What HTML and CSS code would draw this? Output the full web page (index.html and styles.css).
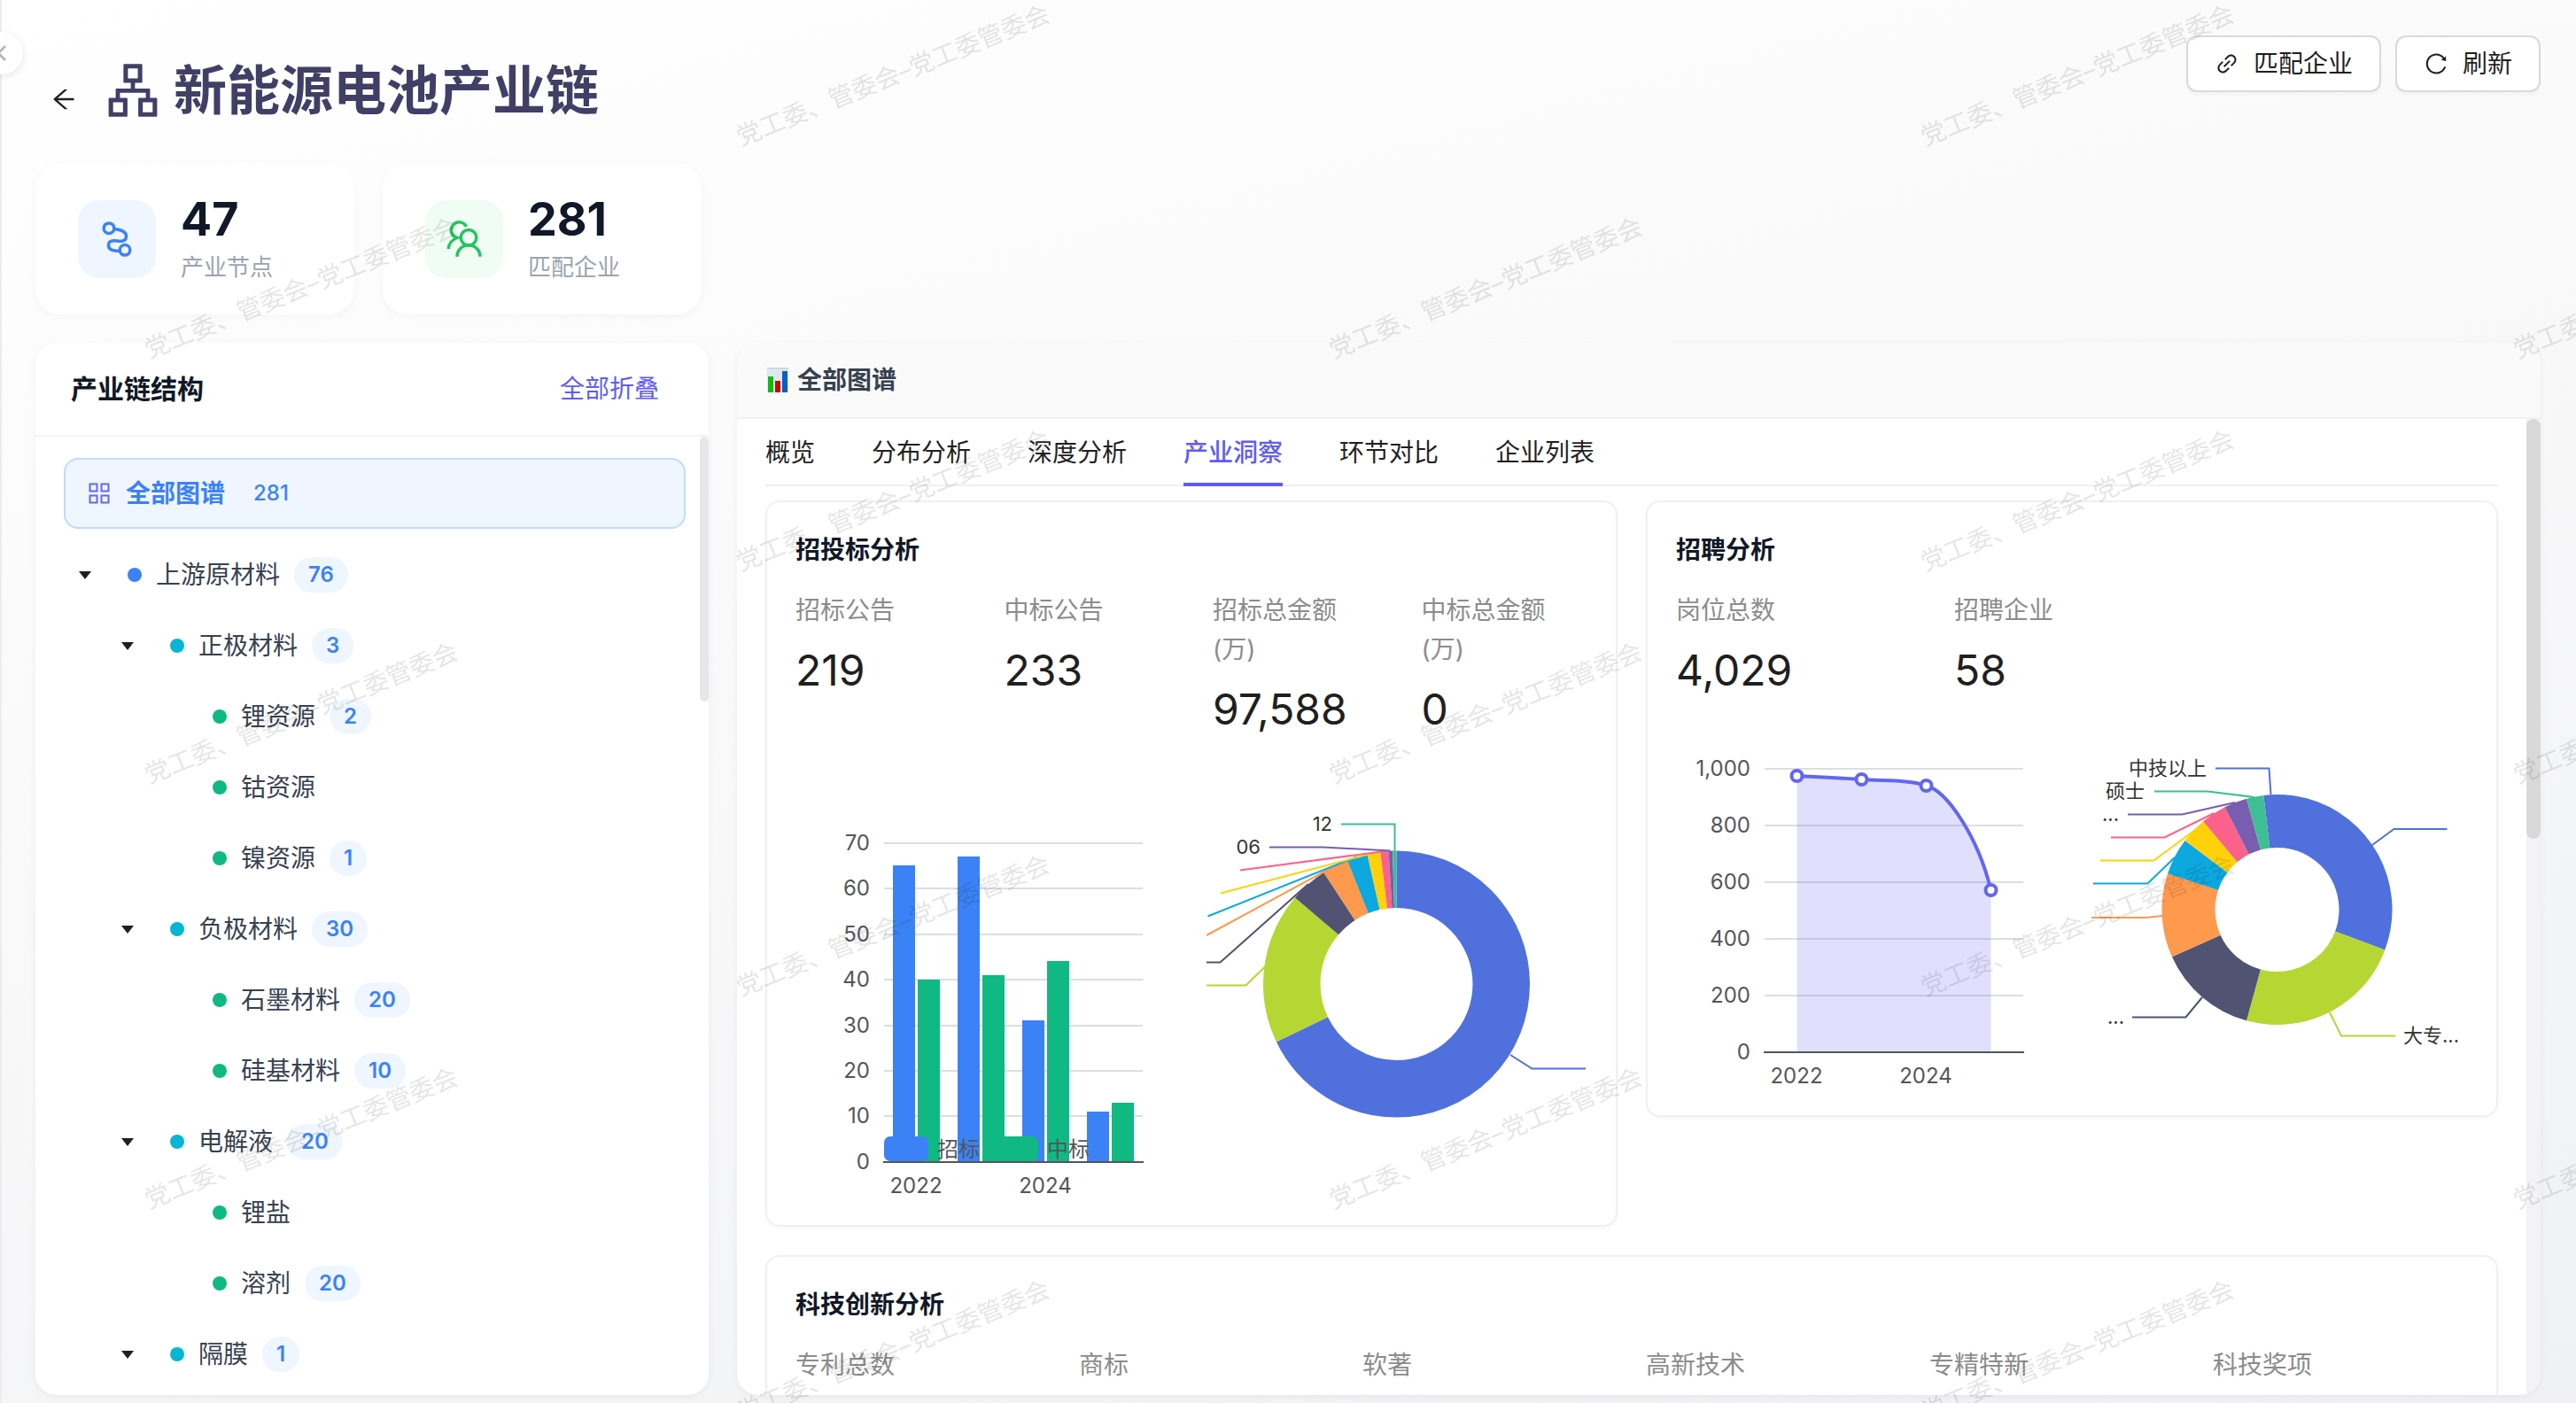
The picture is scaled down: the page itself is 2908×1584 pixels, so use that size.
FILE: index.html
```html
<!DOCTYPE html>
<html lang="zh-CN">
<head>
  <meta charset="UTF-8">
  <title>新能源电池产业链</title>
  <link rel="stylesheet" href="styles.css">
</head>

<body>
  <button class="collapse" aria-label="收起菜单">
    <svg viewBox="0 0 24 24"><path d="M16 4 8 12l8 8" fill="none" stroke="currentColor" stroke-width="3"/></svg>
  </button>

  <main class="page">
    <header class="header">
      <div class="heading">
        <button class="back" aria-label="返回">
          <svg class="icon-lg" viewBox="0 0 1024 1024"><path d="M872 474H286.9l350.2-304c5.6-4.9 2.2-14-5.2-14h-88.5c-3.9 0-7.6 1.4-10.5 3.9L155 487.8a31.96 31.96 0 000 48.3L535.1 866c1.5 1.3 3.3 2 5.2 2h91.5c7.4 0 10.8-9.2 5.2-14L286.9 550H872c4.4 0 8-3.6 8-8v-60c0-4.4-3.6-8-8-8z"/></svg>
        </button>
        <h1>
          <svg viewBox="0 0 1024 1024"><path d="M908 640H804V488c0-4.4-3.6-8-8-8H548v-96h108c8.8 0 16-7.2 16-16V80c0-8.8-7.2-16-16-16H368c-8.8 0-16 7.2-16 16v288c0 8.8 7.2 16 16 16h108v96H228c-4.4 0-8 3.6-8 8v152H116c-8.8 0-16 7.2-16 16v288c0 8.8 7.2 16 16 16h288c8.8 0 16-7.2 16-16V656c0-8.8-7.2-16-16-16H292v-88h440v88H620c-8.8 0-16 7.2-16 16v288c0 8.8 7.2 16 16 16h288c8.8 0 16-7.2 16-16V656c0-8.8-7.2-16-16-16zm-564 76v168H176V716h168zm84-408V140h168v168H428zm420 576H680V716h168v168z"/></svg>
          新能源电池产业链
        </h1>
      </div>
      <div class="actions">
        <button class="btn">
          <svg class="icon" viewBox="0 0 1024 1024"><path d="M574 665.4a8.03 8.03 0 00-11.3 0L446.5 781.6c-53.8 53.8-144.6 59.5-204 0-59.5-59.5-53.8-150.2 0-204l116.2-116.2c3.1-3.1 3.1-8.2 0-11.3l-39.8-39.8a8.03 8.03 0 00-11.3 0L191.4 526.5c-84.6 84.6-84.6 221.5 0 306s221.5 84.6 306 0l116.2-116.2c3.1-3.1 3.1-8.2 0-11.3L574 665.4zm258.6-474c-84.6-84.6-221.5-84.6-306 0L410.3 307.6a8.03 8.03 0 000 11.3l39.7 39.7c3.1 3.1 8.2 3.1 11.3 0l116.2-116.2c53.8-53.8 144.6-59.5 204 0 59.5 59.5 53.8 150.2 0 204L665.3 562.6a8.03 8.03 0 000 11.3l39.8 39.8c3.1 3.1 8.2 3.1 11.3 0l116.2-116.2c84.5-84.6 84.5-221.5 0-306.1zM610.1 372.3a8.03 8.03 0 00-11.3 0L372.3 598.7a8.03 8.03 0 000 11.3l39.6 39.6c3.1 3.1 8.2 3.1 11.3 0l226.4-226.4c3.1-3.1 3.1-8.2 0-11.3l-39.5-39.6z"/></svg>
          匹配企业
        </button>
        <button class="btn">
          <svg class="icon" viewBox="0 0 1024 1024"><path d="M909.1 209.3l-56.4 44.1C775.8 155.1 656.2 92 521.9 92 290 92 102.3 279.5 102 511.5 101.7 743.7 289.8 932 521.9 932c181.3 0 335.8-115 394.6-276.1 1.5-4.2-.7-8.9-4.9-10.3l-56.7-19.5a8 8 0 00-10.1 4.8c-1.8 5-3.8 10-5.9 14.9-17.3 41-42.1 77.8-73.7 109.4A344.77 344.77 0 01655.9 829c-42.3 17.9-87.4 27-133.8 27-46.5 0-91.5-9.1-133.8-27A341.5 341.5 0 01279 755.2a342.16 342.16 0 01-73.7-109.4c-17.9-42.4-27-87.4-27-133.9s9.1-91.5 27-133.9c17.3-41 42.1-77.8 73.7-109.4 31.6-31.6 68.4-56.4 109.3-73.8 42.3-17.9 87.4-27 133.8-27 46.5 0 91.5 9.1 133.8 27a341.5 341.5 0 01109.3 73.8c9.9 9.9 19.2 20.4 27.8 31.4l-60.2 47a8 8 0 003 14.1l175.6 43c5 1.2 9.9-2.6 9.9-7.7l.8-180.9c-.1-6.6-7.8-10.3-13-6.2z"/></svg>
          刷新
        </button>
      </div>
    </header>

    <section class="stats">
      <div class="stat">
        <div class="stat-icon blue">
          <svg viewBox="0 0 48 48"><circle cx="15" cy="11.7" r="5.8"/><circle cx="33" cy="36.3" r="5.8"/><path d="M21 12.5C30 13.5 35 16 34.5 21.5 34 27 28 26.5 24 26 18 25.5 14.5 26 14.5 31c0 5.5 5.5 6.3 12.5 6.5"/></svg>
        </div>
        <div>
          <div class="stat-value">47</div>
          <div class="stat-label">产业节点</div>
        </div>
      </div>
      <div class="stat">
        <div class="stat-icon green">
          <svg viewBox="0 0 48 48"><circle cx="29" cy="22.3" r="8.8"/><path d="M16 43.7a13 13 0 0 1 26 0M26.5 10A9 9 0 1 0 16 22.5C10 25 6.3 30 6.3 35"/></svg>
        </div>
        <div>
          <div class="stat-value">281</div>
          <div class="stat-label">匹配企业</div>
        </div>
      </div>
    </section>

    <div class="columns">
      <aside class="panel">
        <div class="tree-head">
          <h2>产业链结构</h2>
          <button class="link">全部折叠</button>
        </div>
        <div class="tree-body">
          <button class="tree-all">
            <svg class="icon-lg" viewBox="0 0 32 32"><path d="M5.500 5.500h8v8h-8zM18.500 5.500h8v8h-8zM5.500 18.500h8v8h-8zM18.500 18.500h8v8h-8z" fill="none" stroke="currentColor" stroke-width="2"/></svg>
            <span>全部图谱</span>
            <span class="count">281</span>
          </button>
          <ul class="tree">
            <li class="l1"><button class="caret" aria-label="折叠"></button><i></i>上游原材料<b>76</b></li>
            <li class="l2"><button class="caret" aria-label="折叠"></button><i></i>正极材料<b>3</b></li>
            <li class="l3"><i></i>锂资源<b>2</b></li>
            <li class="l3"><i></i>钴资源</li>
            <li class="l3"><i></i>镍资源<b>1</b></li>
            <li class="l2"><button class="caret" aria-label="折叠"></button><i></i>负极材料<b>30</b></li>
            <li class="l3"><i></i>石墨材料<b>20</b></li>
            <li class="l3"><i></i>硅基材料<b>10</b></li>
            <li class="l2"><button class="caret" aria-label="折叠"></button><i></i>电解液<b>20</b></li>
            <li class="l3"><i></i>锂盐</li>
            <li class="l3"><i></i>溶剂<b>20</b></li>
            <li class="l2"><button class="caret" aria-label="折叠"></button><i></i>隔膜<b>1</b></li>
          </ul>
          <div class="tree-thumb"></div>
        </div>
      </aside>

      <section class="panel">
        <div class="main-head">
          <svg viewBox="0 0 24 28"><path d="M0 0h24v28H0z" fill="#dfe8f0"/><path d="M0 0h24v2H0z" fill="#cfd8df"/><path d="M1 10h6v18H1z" fill="#0dbb12"/><path d="M9 15h6v13H9z" fill="#c50a0a"/><path d="M17 4h6v24h-6z" fill="#0a5fc4"/></svg>
          <h2>全部图谱</h2>
        </div>
        <div class="scroll">
          <div class="content">
            <nav class="tabs" role="tablist">
              <button role="tab">概览</button>
              <button role="tab">分布分析</button>
              <button role="tab">深度分析</button>
              <button role="tab" class="active" aria-selected="true">产业洞察</button>
              <button role="tab">环节对比</button>
              <button role="tab">企业列表</button>
            </nav>

            <div class="cards">
              <article class="card">
                <h3>招投标分析</h3>
                <dl class="figures four">
                  <div><dt>招标公告</dt><dd>219</dd></div>
                  <div><dt>中标公告</dt><dd>233</dd></div>
                  <div><dt>招标总金额<br>(万)</dt><dd>97,588</dd></div>
                  <div><dt>中标总金额<br>(万)</dt><dd>0</dd></div>
                </dl>
                <div class="charts">
                  <svg class="chart" viewBox="0 0 431 480" role="img" aria-label="招标与中标公告数">
                    <path class="grid" d="M100 81h292M100 132h292M100 184h292M100 235h292M100 287h292M100 338h292M100 389h292"/>
                    <g fill="#3b82f6">
                      <rect x="110" y="106" width="25" height="335"/>
                      <rect x="183" y="96" width="25" height="345"/>
                      <rect x="256" y="281" width="25" height="160"/>
                      <rect x="329" y="384" width="25" height="57"/>
                    </g>
                    <g fill="#10b981">
                      <rect x="138" y="235" width="25" height="206"/>
                      <rect x="211" y="230" width="25" height="211"/>
                      <rect x="284" y="214" width="25" height="227"/>
                      <rect x="357" y="374" width="25" height="67"/>
                    </g>
                    <path class="axis" d="M99 441h294"/>
                    <g class="tick end">
                      <text x="84" y="89">70</text>
                      <text x="84" y="140">60</text>
                      <text x="84" y="192">50</text>
                      <text x="84" y="243">40</text>
                      <text x="84" y="295">30</text>
                      <text x="84" y="346">20</text>
                      <text x="84" y="397">10</text>
                      <text x="84" y="449">0</text>
                    </g>
                    <g class="tick mid">
                      <text x="136" y="476">2022</text>
                      <text x="282" y="476">2024</text>
                    </g>
                    <rect x="100" y="412" width="50" height="28" rx="7" fill="#3b82f6"/>
                    <rect x="224" y="412" width="50" height="28" rx="7" fill="#10b981"/>
                    <g class="tick">
                      <text x="160" y="435">招标</text>
                      <text x="284" y="435">中标</text>
                    </g>
                  </svg>
                  <svg class="chart" viewBox="0 0 431 480" role="img" aria-label="月度分布">
                    <g class="ring" stroke-width="64.5" transform="rotate(-90 215.5 240)">
                      <circle class="c1" cx="215.5" cy="240" r="118.25" pathLength="360" stroke-dasharray="244.3 360"/>
                      <circle class="c2" cx="215.5" cy="240" r="118.25" pathLength="360" stroke-dasharray="66.1 360" stroke-dashoffset="-244.3"/>
                      <circle class="c3" cx="215.5" cy="240" r="118.25" pathLength="360" stroke-dasharray="16.5 360" stroke-dashoffset="-310.4"/>
                      <circle class="c4" cx="215.5" cy="240" r="118.25" pathLength="360" stroke-dasharray="11.4 360" stroke-dashoffset="-326.9"/>
                      <circle class="c5" cx="215.5" cy="240" r="118.25" pathLength="360" stroke-dasharray="9 360" stroke-dashoffset="-338.3"/>
                      <circle class="c6" cx="215.5" cy="240" r="118.25" pathLength="360" stroke-dasharray="5.7 360" stroke-dashoffset="-347.3"/>
                      <circle class="c7" cx="215.5" cy="240" r="118.25" pathLength="360" stroke-dasharray="3.6 360" stroke-dashoffset="-353"/>
                      <circle class="c8" cx="215.5" cy="240" r="118.25" pathLength="360" stroke-dasharray="1.7 360" stroke-dashoffset="-356.6"/>
                      <circle class="c9" cx="215.5" cy="240" r="118.25" pathLength="360" stroke-dasharray="1.7 360" stroke-dashoffset="-358.3"/>
                    </g>
                    <g class="leader">
                      <path class="c1" d="M429 335.5h-60.5L344 320"/>
                      <path class="c2" d="M1 241.5h44.5L67 220.5"/>
                      <path class="c3" d="M1 215.5h15.5L116 127"/>
                      <path class="c4" d="M1 185 146 106.5"/>
                      <path class="c5" d="M2.5 163.5 171 96"/>
                      <path class="c6" d="M17 137.5 189.5 92"/>
                      <path class="c7" d="M39 111.5 202 90"/>
                      <path class="c8" d="M72 85.5h60.5L208.5 89.5"/>
                      <path class="c9" d="M153 59.5h60.5V90"/>
                    </g>
                    <g class="slice-label end">
                      <text x="143" y="67">12</text>
                      <text x="62" y="93">06</text>
                    </g>
                  </svg>
                </div>
              </article>

              <article class="card">
                <h3>招聘分析</h3>
                <dl class="figures three">
                  <div><dt>岗位总数</dt><dd>4,029</dd></div>
                  <div><dt>招聘企业</dt><dd>58</dd></div>
                </dl>
                <div class="charts">
                  <svg class="chart" viewBox="0 0 431 400" role="img" aria-label="岗位趋势">
                    <path class="grid" d="M100 41h292M100 105h292M100 169h292M100 233h292M100 297h292"/>
                    <path d="M136.5 49C161 50 185 51 209.5 53 234 55 263 53 282.5 60 306 66 341 118 355.5 178V361H136.5z" fill="#6366f1" fill-opacity=".2"/>
                    <path class="axis" d="M99 361h294"/>
                    <path d="M136.5 49C161 50 185 51 209.5 53 234 55 263 53 282.5 60 306 66 341 118 355.5 178" fill="none" stroke="#6366f1" stroke-width="4"/>
                    <g fill="#fff" stroke="#6366f1" stroke-width="4">
                      <circle cx="136.5" cy="49" r="6"/>
                      <circle cx="209.5" cy="53" r="6"/>
                      <circle cx="282.5" cy="60" r="6"/>
                      <circle cx="355.5" cy="178" r="6"/>
                    </g>
                    <g class="tick end">
                      <text x="84" y="49">1,000</text>
                      <text x="84" y="113">800</text>
                      <text x="84" y="177">600</text>
                      <text x="84" y="241">400</text>
                      <text x="84" y="305">200</text>
                      <text x="84" y="369">0</text>
                    </g>
                    <g class="tick mid">
                      <text x="136" y="396">2022</text>
                      <text x="282" y="396">2024</text>
                    </g>
                  </svg>
                  <svg class="chart" viewBox="0 0 431 400" role="img" aria-label="学历分布">
                    <g class="ring" stroke-width="60" transform="rotate(-96.7 215.5 200)">
                      <circle class="c1" cx="215.5" cy="200" r="100" pathLength="360" stroke-dasharray="117.2 360"/>
                      <circle class="c2" cx="215.5" cy="200" r="100" pathLength="360" stroke-dasharray="84.9 360" stroke-dashoffset="-117.2"/>
                      <circle class="c3" cx="215.5" cy="200" r="100" pathLength="360" stroke-dasharray="50.3 360" stroke-dashoffset="-202.1"/>
                      <circle class="c4" cx="215.5" cy="200" r="100" pathLength="360" stroke-dasharray="42.6 360" stroke-dashoffset="-252.4"/>
                      <circle class="c5" cx="215.5" cy="200" r="100" pathLength="360" stroke-dasharray="18.6 360" stroke-dashoffset="-295"/>
                      <circle class="c6" cx="215.5" cy="200" r="100" pathLength="360" stroke-dasharray="13.2 360" stroke-dashoffset="-313.6"/>
                      <circle class="c7" cx="215.5" cy="200" r="100" pathLength="360" stroke-dasharray="12.9 360" stroke-dashoffset="-326.8"/>
                      <circle class="c8" cx="215.5" cy="200" r="100" pathLength="360" stroke-dasharray="11.6 360" stroke-dashoffset="-339.7"/>
                      <circle class="c9" cx="215.5" cy="200" r="100" pathLength="360" stroke-dasharray="8.7 360" stroke-dashoffset="-351.3"/>
                    </g>
                    <g class="leader">
                      <path class="c1" d="M407.5 109h-60L323 127"/>
                      <path class="c2" d="M349 342.5h-61L275 316"/>
                      <path class="c3" d="M52 321.5h60.5L131 299"/>
                      <path class="c4" d="M6 209h61.5L86.5 207"/>
                      <path class="c5" d="M8 170.5h61.5L100 141"/>
                      <path class="c6" d="M16 144.5h60.5L123 110"/>
                      <path class="c7" d="M28 118.5h60.5L144.5 91"/>
                      <path class="c8" d="M47 92.5h61.5L168 79"/>
                      <path class="c9" d="M77 66.5h60L190 73"/>
                      <path class="c1" d="M146 40.5h60.5L208.5 70"/>
                    </g>
                    <g class="slice-label end">
                      <text x="136" y="48">中技以上</text>
                      <text x="66" y="74">硕士</text>
                      <text x="37" y="100">...</text>
                      <text x="43" y="329">...</text>
                    </g>
                    <g class="slice-label">
                      <text x="358" y="350">大专...</text>
                    </g>
                  </svg>
                </div>
              </article>

              <article class="card wide">
                <h3>科技创新分析</h3>
                <dl class="figures six">
                  <div><dt>专利总数</dt></div>
                  <div><dt>商标</dt></div>
                  <div><dt>软著</dt></div>
                  <div><dt>高新技术</dt></div>
                  <div><dt>专精特新</dt></div>
                  <div><dt>科技奖项</dt></div>
                </dl>
              </article>
            </div>
          </div>
          <div class="track"><div class="thumb"></div></div>
        </div>
      </section>
    </div>
  </main>

  <!-- watermark tile, repeated over the whole page -->
  <svg class="watermark" aria-hidden="true">
    <defs>
      <pattern id="mark" width="1337" height="480" patternUnits="userSpaceOnUse">
        <text transform="translate(340 325) rotate(-22)" y="10">党工委、管委会–党工委管委会</text>
        <text transform="translate(1008 85) rotate(-22)" y="10">党工委、管委会–党工委管委会</text>
      </pattern>
    </defs>
    <rect width="100%" height="100%" fill="url(#mark)"/>
  </svg>
</body>

</html>
```
FILE: styles.css
```css
:root {
  --primary: #5f5cf6;
  --blue: #3b82f6;
  --text: #1f1f1f;
  --dark: #111827;
  --muted: #8c8c8c;
  --line: #f0f0f0;
}

* {
  box-sizing: border-box;
}

body {
  margin: 0;
  height: 100vh;
  overflow: hidden;
  font-family: Inter, "Noto Sans CJK SC", sans-serif;
  font-size: 28px;
  line-height: 44px;
  color: var(--text);
  background: linear-gradient(165deg, #fff 0%, #fafafa 35%, #f0f1f4 100%);
  border-left: 2px solid #ececee;
}

h1, h2, h3, dl, dd, ul {
  margin: 0;
  padding: 0;
}

button {
  font: inherit;
  color: inherit;
  background: none;
  border: none;
  padding: 0;
  cursor: pointer;
}

svg {
  display: block;
  fill: currentColor;
}

.icon {
  width: 28px;
  height: 28px;
}

.icon-lg {
  width: 32px;
  height: 32px;
}

.page {
  height: 100%;
  display: flex;
  flex-direction: column;
  padding: 40px 40px 9px 38px;
}

/* round handle that sits half outside the window edge */
.collapse {
  position: absolute;
  left: -22px;
  top: 36px;
  width: 48px;
  height: 48px;
  border-radius: 50%;
  background: #fff;
  color: #b8b8b8;
  box-shadow: 0 2px 8px rgba(0, 0, 0, 0.1);
  padding: 12px;
}

.header {
  display: flex;
  justify-content: space-between;
  align-items: flex-start;
  margin-bottom: 36px;
}

.heading {
  display: flex;
  align-items: flex-end;
  gap: 12px;
  padding-top: 16px;
}

.back {
  width: 64px;
  height: 72px;
  display: grid;
  place-items: center;
}

h1 {
  display: flex;
  align-items: center;
  gap: 12px;
  font-size: 60px;
  line-height: 92px;
  font-weight: 700;
  color: #413f66;
}

h1 svg {
  width: 68px;
  height: 68px;
}

.actions {
  display: flex;
  gap: 16px;
}

.btn {
  display: flex;
  align-items: center;
  gap: 16px;
  height: 64px;
  padding: 0 30px;
  background: #fff;
  border: 2px solid #d9d9d9;
  border-radius: 12px;
  box-shadow: 0 4px 0 rgba(0, 0, 0, 0.02);
}

.stats {
  display: flex;
  gap: 32px;
  margin-bottom: 32px;
}

.stat {
  display: flex;
  align-items: center;
  gap: 28px;
  width: 360px;
  padding: 34px 48px;
  background: #fff;
  border-radius: 28px;
  box-shadow: 0 2px 8px rgba(0, 0, 0, 0.04);
}

.stat-icon {
  width: 88px;
  height: 88px;
  border-radius: 24px;
  padding: 20px;
}

.stat-icon svg {
  fill: none;
  stroke: currentColor;
  stroke-width: 3.5;
}

.stat-icon.blue {
  background: #eff6ff;
  color: var(--blue);
}

.stat-icon.green {
  background: #f0fdf4;
  color: #22c55e;
}

.stat-value {
  font-size: 52px;
  line-height: 60px;
  font-weight: 700;
  color: var(--dark);
}

.stat-label {
  margin-top: 4px;
  font-size: 26px;
  line-height: 39px;
  color: #9ca3af;
}

.columns {
  flex: 1;
  min-height: 0;
  display: grid;
  grid-template-columns: 760px 1fr;
  grid-template-rows: 100%;
  gap: 32px;
}

.panel {
  display: flex;
  flex-direction: column;
  min-height: 0;
  background: #fff;
  border-radius: 24px;
  overflow: hidden;
  box-shadow: 0 2px 8px rgba(0, 0, 0, 0.05);
}

/* tree */
.tree-head {
  display: flex;
  align-items: center;
  justify-content: space-between;
  height: 106px;
  flex: none;
  padding: 0 56px 0 40px;
  border-bottom: 2px solid #f3f4f6;
}

.tree-head h2 {
  font-size: 30px;
  font-weight: 600;
  color: var(--dark);
}

.link {
  color: var(--primary);
}

.tree-body {
  position: relative;
  flex: 1;
  min-height: 0;
  padding: 24px 26px 0 32px;
  overflow: hidden;
}

.tree-all {
  display: flex;
  align-items: center;
  gap: 14px;
  width: 100%;
  height: 80px;
  padding: 0 22px;
  margin-bottom: 12px;
  background: #eff6ff;
  border: 2px solid #bfdbfe;
  border-radius: 16px;
  color: var(--blue);
  font-weight: 600;
}

.tree-all svg {
  color: #6366f1;
}

.tree-all .count {
  margin-left: 18px;
  font-size: 24px;
  font-weight: 500;
}

.tree {
  list-style: none;
}

.tree li {
  display: flex;
  align-items: center;
  height: 80px;
  color: #374151;
}

.tree i {
  width: 16px;
  height: 16px;
  margin-right: 16px;
  border-radius: 50%;
  background: #10b981;
}

.tree b {
  margin-left: 16px;
  padding: 0 16px;
  border-radius: 20px;
  background: #eff6ff;
  color: var(--blue);
  font-size: 24px;
  line-height: 40px;
  font-weight: 600;
}

.l2 {
  padding-left: 48px;
}

.l3 {
  padding-left: 168px;
}

.tree .l1 i {
  background: var(--blue);
}

.tree .l2 i {
  background: #06b6d4;
}

.caret {
  width: 48px;
  height: 48px;
  margin-right: 24px;
  display: grid;
  place-items: center;
}

.caret::before {
  content: "";
  border: 7px solid transparent;
  border-top: 9px solid var(--text);
  border-bottom: 0;
}

.tree-thumb {
  position: absolute;
  top: 0;
  right: 0;
  width: 10px;
  height: 27.6%;
  border-radius: 5px;
  background: #e5e7eb;
}

/* main panel */
.main-head {
  display: flex;
  align-items: center;
  gap: 10px;
  height: 86px;
  flex: none;
  padding: 0 34px;
  background: #fafafa;
  border-bottom: 2px solid var(--line);
}

.main-head svg {
  width: 24px;
  height: 28px;
}

.main-head h2 {
  font-size: 28px;
  font-weight: 600;
  color: #374151;
}

.scroll {
  flex: 1;
  min-height: 0;
  display: flex;
}

.content {
  flex: 1;
  min-width: 0;
  padding: 16px 32px;
}

.track {
  width: 16px;
  background: #f3f3f5;
}

.thumb {
  height: 43%;
  border-radius: 8px;
  background: #d9d9d9;
}

.tabs {
  display: flex;
  gap: 64px;
  margin-bottom: 16px;
  box-shadow: inset 0 -2px 0 var(--line);
}

.tabs button {
  padding-bottom: 12px;
  border-bottom: 4px solid transparent;
}

.tabs .active {
  color: var(--primary);
  border-color: var(--primary);
  font-weight: 500;
}

.cards {
  display: grid;
  grid-template-columns: 1fr 1fr;
  align-items: start;
  gap: 32px;
}

.card {
  min-width: 0;
  padding: 32px;
  background: #fff;
  border: 2px solid var(--line);
  border-radius: 16px;
  box-shadow: 0 2px 4px rgba(0, 0, 0, 0.03);
}

.wide {
  grid-column: span 2;
  min-height: 320px;
}

.card h3 {
  margin-bottom: 24px;
  font-size: 28px;
  font-weight: 600;
  color: var(--dark);
}

.figures {
  display: grid;
  gap: 48px;
}

.four {
  grid-template-columns: repeat(4, 1fr);
}

.three {
  grid-template-columns: repeat(3, 1fr);
}

.six {
  grid-template-columns: repeat(6, 1fr);
  gap: 32px;
}

.figures dt {
  color: var(--muted);
}

.figures dd {
  margin-top: 8px;
  font-size: 48px;
  line-height: 76px;
}

.charts {
  display: grid;
  grid-template-columns: 1fr 1fr;
  gap: 32px;
  margin-top: 32px;
}

.chart {
  width: 100%;
  overflow: visible;
}

.grid {
  stroke: #dbdee4;
  stroke-width: 2;
}

.axis {
  stroke: #54555a;
  stroke-width: 2;
}

.tick {
  font-size: 24px;
  fill: #54555a;
}

.slice-label {
  font-size: 22px;
  fill: #333;
}

.end {
  text-anchor: end;
}

.mid {
  text-anchor: middle;
}

.ring, .leader {
  fill: none;
}

.leader {
  stroke-width: 2;
}

.c1 { stroke: #5070dd; }
.c2 { stroke: #b6d634; }
.c3 { stroke: #505372; }
.c4 { stroke: #ff994d; }
.c5 { stroke: #0ca8df; }
.c6 { stroke: #ffd10a; }
.c7 { stroke: #fb628b; }
.c8 { stroke: #785db0; }
.c9 { stroke: #3fbe95; }

.watermark {
  position: absolute;
  inset: 0;
  width: 100%;
  height: 100%;
  pointer-events: none;
  font-size: 28px;
  fill: rgba(0, 0, 0, 0.1);
  text-anchor: middle;
}
```
